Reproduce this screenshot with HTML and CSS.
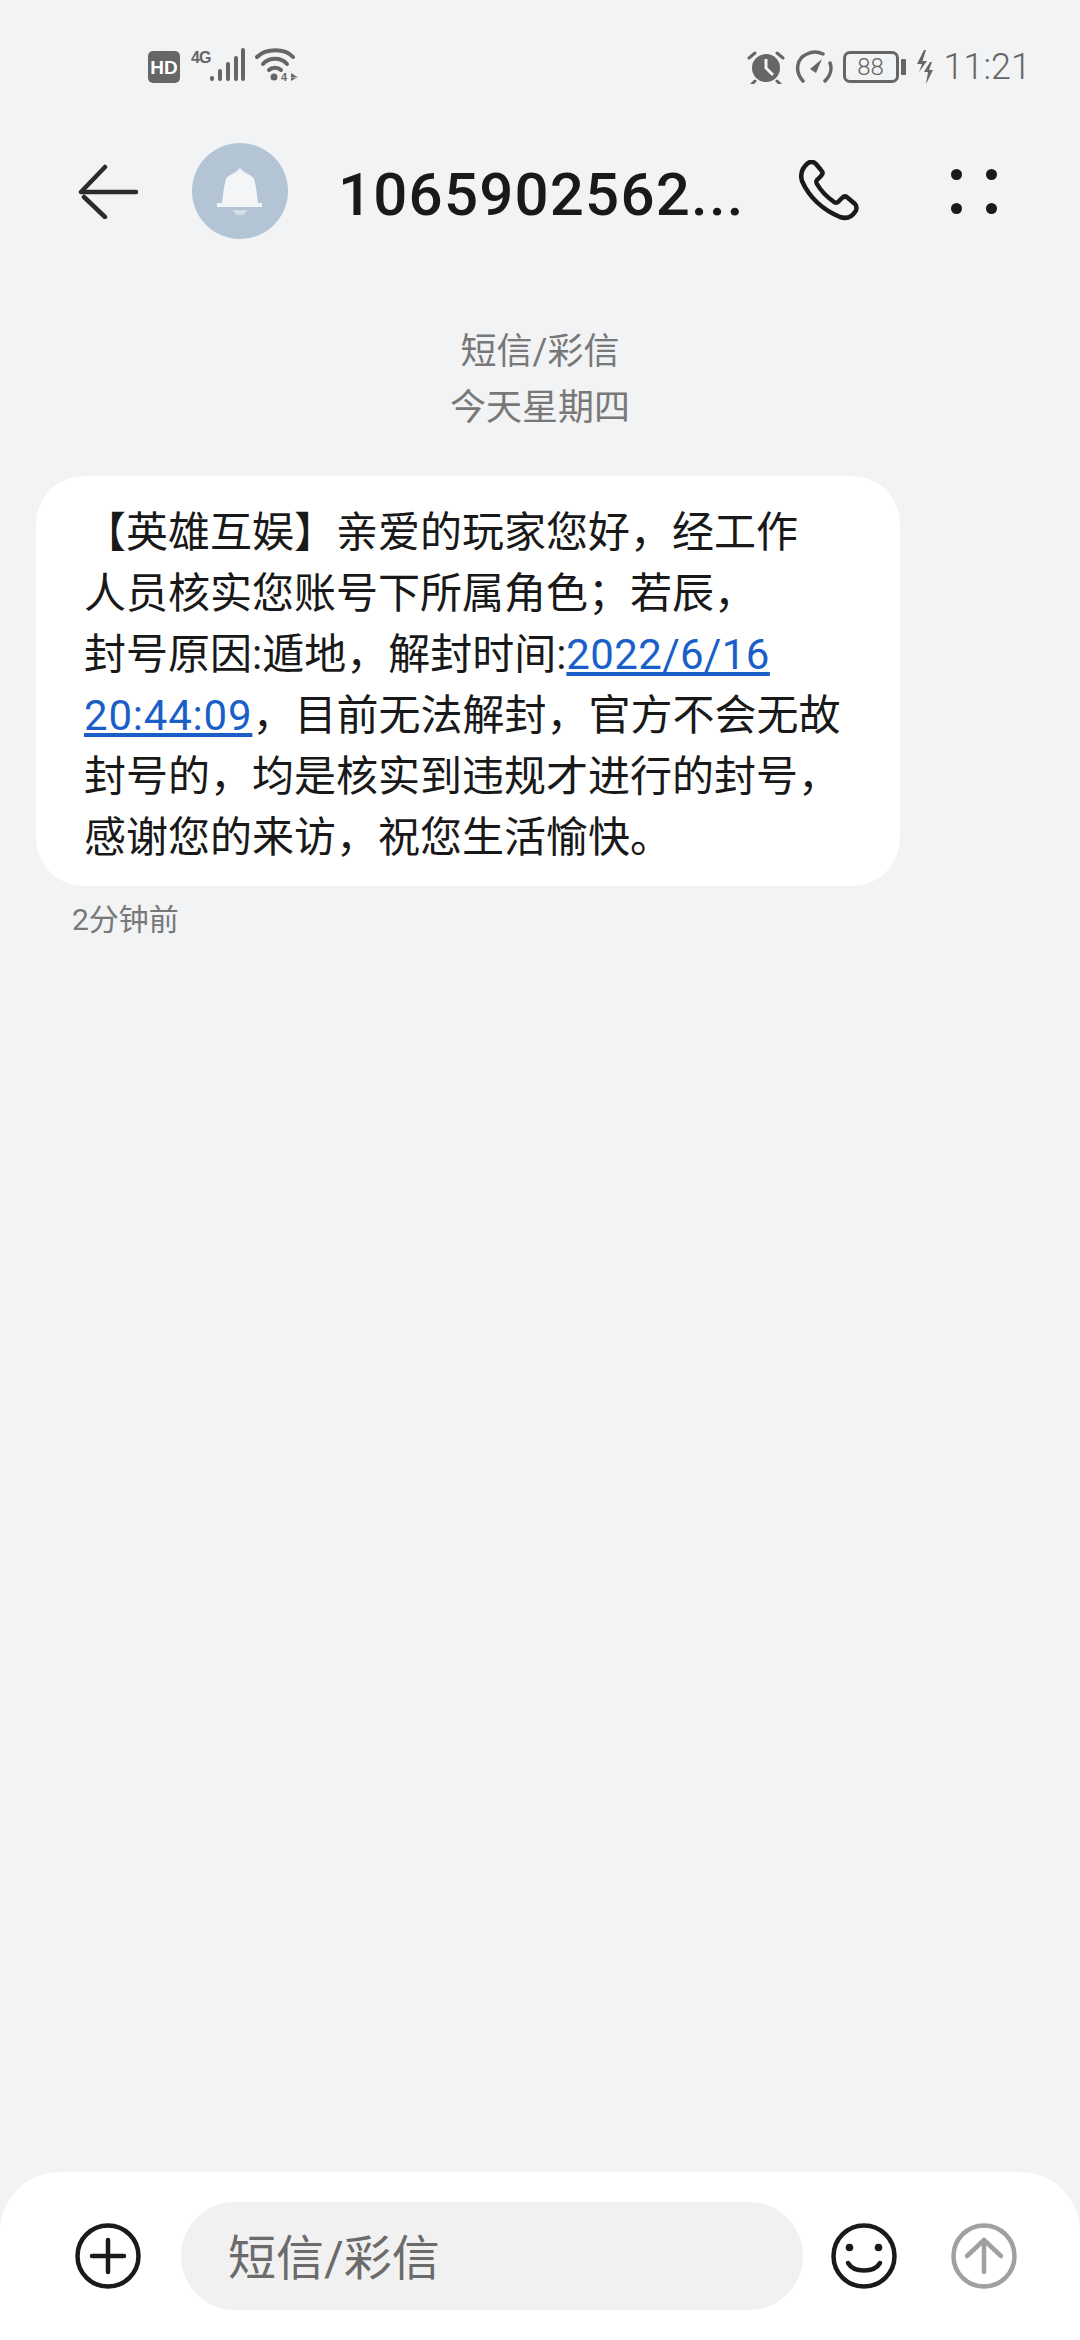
FILE: index.html
```html
<!DOCTYPE html>
<html lang="zh-CN">
<head>
    <meta charset="UTF-8" />
    <meta name="viewport" content="width=device-width, initial-scale=1.0"/>
    <title>短信</title>
    <link rel="stylesheet" href="styles.css">
</head>
<body>
<div class="screen">
    <div class="status-bar">
        <div class="status-left">
            <svg class="ic-hd" width="32" height="32" viewBox="0 0 32 32">
                <rect width="32" height="32" rx="5" fill="#666"/>
                <text x="16" y="23" text-anchor="middle" class="hd-text">HD</text>
            </svg>
            <svg class="ic-signal" width="54" height="36" viewBox="0 0 54 36">
                <text x="0" y="15" class="net-text">4G</text>
                <g stroke="#666" stroke-width="4" stroke-linecap="round">
                    <path d="M21 30v1"/>
                    <path d="M29 23v8"/>
                    <path d="M37 16v15"/>
                    <path d="M45 10v21"/>
                    <path d="M52 2v29"/>
                </g>
            </svg>
            <svg class="ic-wifi" width="44" height="34" viewBox="0 0 44 34">
                <g fill="none" stroke="#666" stroke-width="4" stroke-linecap="round">
                    <path d="M2 9C11 0 30 0 38 9"/>
                    <path d="M8 16C14 9 26 9 32 16"/>
                    <path d="M14 22C17 19 23 19 26 22"/>
                </g>
                <circle cx="19" cy="29" r="3.500" fill="#666"/>
                <text x="26" y="33" class="wifi-text">4</text>
                <path d="M36 25l7 4.500h-7zM36 33v-3h5z" fill="#666"/>
            </svg>
        </div>
        <div class="status-right">
            <svg width="38" height="34" viewBox="0 0 38 34">
                <circle cx="19" cy="18" r="14" fill="#666"/>
                <path d="M19 9v9l7 7" fill="none" stroke="#f1f3f5" stroke-width="3"/>
                <path d="M2 8l6-5M36 8l-6-5M8 31l-3 3M30 31l3 3" stroke="#666" stroke-width="3" stroke-linecap="round"/>
            </svg>
            <svg width="38" height="34" viewBox="0 0 38 34">
                <path d="M8 31C-1 21 2 8 12 4C18 1 24 2 28 4" fill="none" stroke="#666" stroke-width="3.500" stroke-linecap="round"/>
                <path d="M30 31C36 25 37 18 35 13" fill="none" stroke="#666" stroke-width="3.500" stroke-linecap="round"/>
                <path d="M15 19L27 9L21 23Z" fill="#666"/>
            </svg>
            <div class="battery">
                <div class="battery-body">88</div>
                <div class="battery-nub"></div>
            </div>
            <svg width="18" height="34" viewBox="0 0 18 34">
                <path d="M8 0L1 14h5L3 22l8-11H6.500L10 0Z" fill="#666"/>
                <path d="M14 12l-6 10h4L10 34l7-14h-4l3-8Z" fill="#666"/>
            </svg>
            <span class="clock">11:21</span>
        </div>
    </div>

    <div class="top-bar">
        <svg class="ic-back" width="60" height="56" viewBox="0 0 60 56">
            <path d="M3 29H58M3 29L27 4M6 34L27 54" fill="none" stroke="#2b2b2b" stroke-width="4.500" stroke-linecap="round"/>
        </svg>
        <div class="avatar">
            <svg width="48" height="50" viewBox="0 0 48 50">
                <path d="M6 37C7 28 8 20 10 13C11 10 17 8 21 5L24 2L27 5C31 8 37 10 38 13C40 20 41 28 42 37H46V41H1V37Z" fill="#f3f5f7"/>
                <path d="M17 44H31C29 51 19 51 17 44Z" fill="#d5dfe8"/>
            </svg>
        </div>
        <div class="contact-name">1065902562...</div>
        <svg class="ic-phone" width="62" height="62" viewBox="0 0 62 62">
            <path d="M9 3C12 1 15 2 17 4L22 10C24 12 24 14 22 16L18 20C17 21 17 22 18 24C22 31 28 37 35 42C37 43 38 43 39 42L43 38C45 36 47 36 49 38L56 44C58 46 58 50 56 52C52 58 47 59 41 57C24 50 10 37 3 21C1 14 3 8 9 3Z" fill="none" stroke="#1a1a1a" stroke-width="4.500" stroke-linejoin="round"/>
        </svg>
        <div class="more-dots">
            <span class="dot"></span><span class="dot"></span>
            <span class="dot"></span><span class="dot"></span>
        </div>
    </div>

    <div class="thread">
        <div class="thread-head">
            <div>短信/彩信</div>
            <div>今天星期四</div>
        </div>
        <div class="bubble">【英雄互娱】亲爱的玩家您好，经工作<br>人员核实您账号下所属角色；若辰，<br>封号原因:遁地，解封时间:<a class="link" href="#">2022/6/16</a><br><a class="link link-time" href="#">20:44:09</a>，目前无法解封，官方不会无故<br>封号的，均是核实到违规才进行的封号，<br>感谢您的来访，祝您生活愉快。</div>
        <div class="msg-time">2分钟前</div>
    </div>

    <div class="composer">
        <svg class="ic-round" width="66" height="66" viewBox="0 0 66 66">
            <circle cx="33" cy="33" r="30.500" fill="none" stroke="#1a1a1a" stroke-width="4.500"/>
            <path d="M17 33H49M33 17V49" stroke="#1a1a1a" stroke-width="4.500" stroke-linecap="round"/>
        </svg>
        <div class="input-box">短信/彩信</div>
        <svg class="ic-round" width="66" height="66" viewBox="0 0 66 66">
            <circle cx="33" cy="33" r="30.500" fill="none" stroke="#1a1a1a" stroke-width="4.500"/>
            <circle cx="18.500" cy="24.500" r="3.800" fill="#1a1a1a"/>
            <circle cx="47.500" cy="24.500" r="3.800" fill="#1a1a1a"/>
            <path d="M17 40C23 50 43 50 49 40" fill="none" stroke="#1a1a1a" stroke-width="4.500" stroke-linecap="round"/>
        </svg>
        <svg class="ic-round" width="66" height="66" viewBox="0 0 66 66">
            <circle cx="33" cy="33" r="30.500" fill="none" stroke="#a0a0a0" stroke-width="4.500"/>
            <path d="M33 17V49M33 17L16 33M33 17L50 33" fill="none" stroke="#a0a0a0" stroke-width="4.500" stroke-linecap="round"/>
        </svg>
    </div>
</div>
</body>
</html>
```

FILE: styles.css
```css
* {
    box-sizing: border-box;
}
body {
    margin: 0;
    background: #f1f3f5;
    font-family: Roboto, "Noto Sans CJK SC", sans-serif;
    color: #191919;
}
.screen {
    width: 1080px;
    height: 2340px;
    display: flex;
    flex-direction: column;
    overflow: hidden;
}

/* status bar */
.status-bar {
    height: 130px;
    padding: 48px 49px 0 148px;
    display: flex;
    justify-content: space-between;
    align-items: flex-start;
    flex-shrink: 0;
}
.status-left {
    display: flex;
    gap: 10px;
    align-items: flex-start;
}
.ic-hd {
    margin-top: 3px;
}
.ic-signal {
    margin: 0 0 0 1px;
}
.status-right {
    display: flex;
    align-items: center;
    gap: 10px;
    height: 38px;
}
.hd-text {
    font: bold 19px "Liberation Sans", sans-serif;
    fill: #fff;
}
.net-text {
    font: bold 16px "Liberation Sans", sans-serif;
    letter-spacing: -1px;
    fill: #666;
}
.wifi-text {
    font: bold 11px "Liberation Sans", sans-serif;
    fill: #666;
}
.battery {
    display: flex;
    align-items: center;
    gap: 2px;
}
.battery-body {
    width: 56px;
    height: 32px;
    border: 3px solid #666;
    border-radius: 7px;
    font-size: 24px;
    font-weight: 300;
    line-height: 26px;
    text-align: center;
    color: #666;
}
.battery-nub {
    width: 5px;
    height: 16px;
    background: #666;
    border-radius: 1px;
}
.clock {
    font-size: 36px;
    font-weight: 300;
    color: #666;
    line-height: 38px;
}

/* top bar */
.top-bar {
    height: 122px;
    padding-left: 78px;
    display: flex;
    align-items: center;
    flex-shrink: 0;
}
.avatar {
    width: 96px;
    height: 96px;
    margin-left: 54px;
    border-radius: 50%;
    background: #b3c4d4;
    display: flex;
    align-items: center;
    justify-content: center;
}
.contact-name {
    width: 461px;
    margin-left: 50px;
    padding-top: 6px;
    font-size: 60px;
    font-weight: 500;
    letter-spacing: 1.200px;
    white-space: nowrap;
}
.more-dots {
    width: 46px;
    margin-left: 90px;
    display: grid;
    grid-template-columns: 11px 11px;
    justify-content: space-between;
    row-gap: 23px;
}
.dot {
    width: 11px;
    height: 11px;
    border-radius: 50%;
    background: #1a1a1a;
}

/* messages */
.thread {
    flex: 1;
    padding: 72px 0 0 36px;
}
.thread-head {
    width: 1008px;
    text-align: center;
    font-size: 36px;
    line-height: 56px;
    color: #787878;
}
.bubble {
    width: 864px;
    margin-top: 40px;
    padding: 26px 0 18px 48px;
    background: #fff;
    border-radius: 48px;
    font-size: 42px;
    line-height: 61px;
    white-space: nowrap;
}
.link {
    color: #1a5fc8;
    text-decoration: underline;
    letter-spacing: 0.400px;
}
.link-time {
    letter-spacing: 0.800px;
}
.msg-time {
    margin: 14px 0 0 36px;
    font-size: 30px;
    line-height: 40px;
    color: #787878;
}

/* composer */
.composer {
    height: 168px;
    padding-left: 75px;
    background: #fff;
    border-radius: 60px 60px 0 0;
    display: flex;
    align-items: center;
    flex-shrink: 0;
}
.input-box {
    width: 622px;
    height: 108px;
    margin: 0 28px 0 40px;
    padding-left: 47px;
    border-radius: 54px;
    background: #f1f1f1;
    font-size: 48px;
    line-height: 113px;
    color: #6b6b6b;
}
.ic-round + .ic-round {
    margin-left: 54px;
}
```
